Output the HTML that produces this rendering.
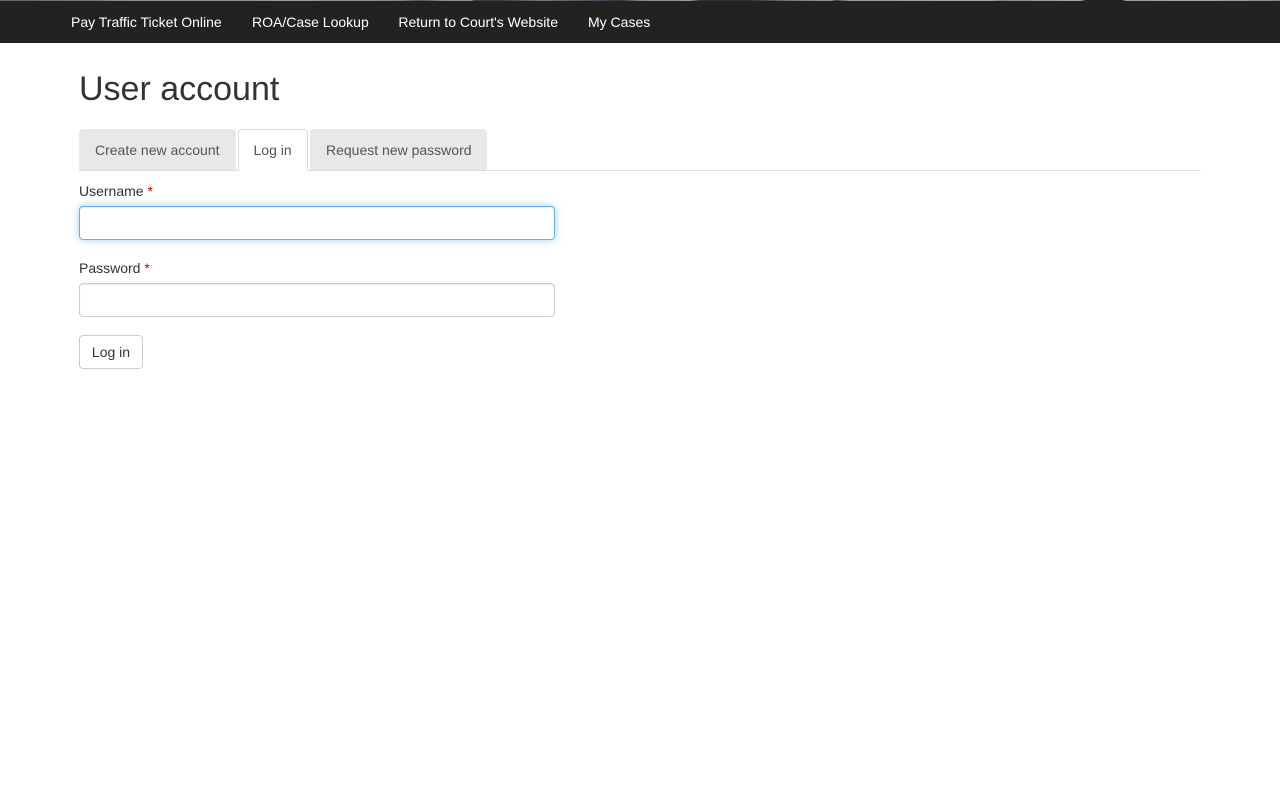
<!DOCTYPE html>
<html lang="en">
<head>
<meta charset="utf-8">
<title>User account</title>
<style>
*{box-sizing:border-box}
html,body{margin:0;padding:0;background:#fff;width:1280px;height:800px;overflow:hidden}
body{font-family:"Liberation Sans",Arial,sans-serif;font-size:14px;line-height:20px;color:#333;position:relative}
a{text-decoration:none}
.bar{position:absolute;left:0;top:0;width:1280px;height:43px;background:#222}
.strip{position:absolute;left:0;top:0;width:1280px;height:1px;background:linear-gradient(90deg,#666 0,#777 100px,#8a8a8a 110px,#999 300px,#888 400px,#555 420px,#888 440px,#999 470px,#3a4048 475px,#3a4048 500px,#777 540px,#556 590px,#2c3440 620px,#888 640px,#999 690px,#2c3440 700px,#2c3440 750px,#777 790px,#999 830px,#444 836px,#999 850px,#aaa 990px,#888 1000px,#aaa 1080px,#222 1086px,#222 1122px,#999 1126px,#aaa 1200px,#888 1280px)}
.nav a{position:absolute;top:12px;color:#fff;white-space:nowrap}
h1{position:absolute;left:79px;top:67px;margin:0;font-size:34px;line-height:44px;font-weight:500;color:#333;white-space:nowrap}
.rule{position:absolute;left:79px;top:170px;width:1122px;height:1px;background:#ddd}
.tab{position:absolute;top:129px;height:41px;padding:11px 15px 10px 16px;background:#e8e8e8;color:#555;border-radius:4px 4px 0 0;white-space:nowrap}
.tab.active{top:129px;height:42px;background:#fff;border:1px solid #ddd;border-bottom-color:#fff;padding:10px 14.5px}
label{position:absolute;left:79px;color:#333;white-space:nowrap}
label span{color:#c00}
.input{position:absolute;left:79px;width:476px;height:34px;background:#fff;border:1px solid #ccc;border-radius:4px;box-shadow:inset 0 1px 1px rgba(0,0,0,.075)}
.input.focus{border-color:#66afe9;box-shadow:inset 0 1px 1px rgba(0,0,0,.075),0 0 8px rgba(102,175,233,.6)}
.btn{position:absolute;left:79px;top:335px;width:64px;height:34px;border:1px solid #ccc;border-radius:4px;background:#fff;color:#333;font:14px/20px "Liberation Sans",Arial,sans-serif;padding:0;text-align:center}
</style>
</head>
<body>
<div class="bar"></div>
<div class="strip"></div>
<div class="nav">
<a href="#" style="left:71px">Pay Traffic Ticket Online</a>
<a href="#" style="left:252px">ROA/Case Lookup</a>
<a href="#" style="left:398.4px">Return to Court's Website</a>
<a href="#" style="left:588px">My Cases</a>
</div>
<h1>User account</h1>
<div class="rule"></div>
<a href="#" class="tab" style="left:79px;width:157px">Create new account</a>
<a href="#" class="tab active" style="left:238px;width:70px">Log in</a>
<a href="#" class="tab" style="left:310px;width:177px">Request new password</a>
<label style="top:181px">Username <span>*</span></label>
<div class="input focus" style="top:206px"></div>
<label style="top:258px">Password <span>*</span></label>
<div class="input" style="top:283px"></div>
<button class="btn">Log in</button>
</body>
</html>
